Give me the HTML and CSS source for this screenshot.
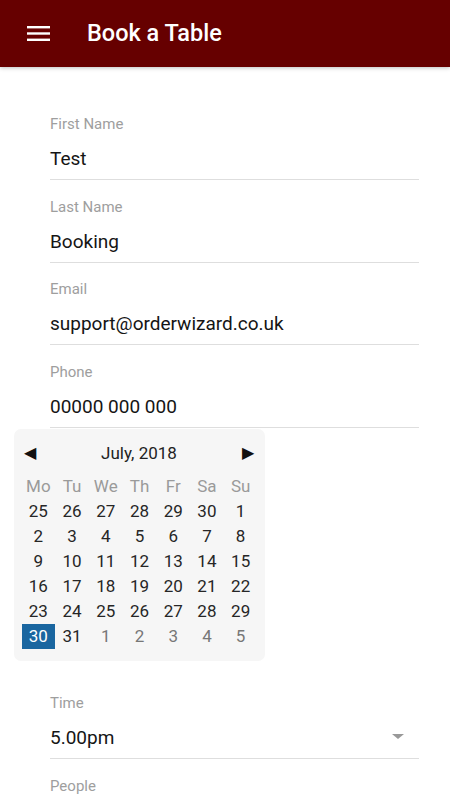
FILE: index.html
```html
<!DOCTYPE html>
<html>
<head>
    <meta charset="utf-8" />
    <title>Book a Table</title>
    <link rel="stylesheet" href="styles.css">
</head>
<body>
    <div class="topbar">
        <svg class="menu" width="23" height="15" viewBox="0 0 23 15">
            <rect x="0" y="0" width="23" height="2.4" fill="#fff" />
            <rect x="0" y="6.3" width="23" height="2.4" fill="#fff" />
            <rect x="0" y="12.6" width="23" height="2.4" fill="#fff" />
        </svg>
        <span class="title">Book a Table</span>
    </div>
    <div class="form">
        <div class="field">
            <div class="label">First Name</div>
            <div class="value">Test</div>
        </div>
        <div class="field">
            <div class="label">Last Name</div>
            <div class="value">Booking</div>
        </div>
        <div class="field">
            <div class="label">Email</div>
            <div class="value">support@orderwizard.co.uk</div>
        </div>
        <div class="field">
            <div class="label">Phone</div>
            <div class="value">00000 000 000</div>
        </div>
    </div>
    <div class="picker">
        <div class="picker-head">
            <span class="arrow">&#9664;</span>
            <span class="month">July, 2018</span>
            <span class="arrow">&#9654;</span>
        </div>
        <div class="days">
            <span class="wd">Mo</span><span class="wd">Tu</span><span class="wd">We</span><span class="wd">Th</span><span class="wd">Fr</span><span class="wd">Sa</span><span class="wd">Su</span>
            <span>25</span><span>26</span><span>27</span><span>28</span><span>29</span><span>30</span><span>1</span>
            <span>2</span><span>3</span><span>4</span><span>5</span><span>6</span><span>7</span><span>8</span>
            <span>9</span><span>10</span><span>11</span><span>12</span><span>13</span><span>14</span><span>15</span>
            <span>16</span><span>17</span><span>18</span><span>19</span><span>20</span><span>21</span><span>22</span>
            <span>23</span><span>24</span><span>25</span><span>26</span><span>27</span><span>28</span><span>29</span>
            <span class="sel">30</span><span>31</span><span class="other">1</span><span class="other">2</span><span class="other">3</span><span class="other">4</span><span class="other">5</span>
        </div>
    </div>
    <div class="form">
        <div class="field">
            <div class="label">Time</div>
            <div class="value select">5.00pm<span class="caret"></span></div>
        </div>
        <div class="field">
            <div class="label">People</div>
        </div>
    </div>
</body>
</html>
```

FILE: styles.css
```css
body {
    margin: 0;
    font-family: Roboto, "Liberation Sans", sans-serif;
    background: #fff;
    overflow: hidden;
}

.topbar {
    height: 67px;
    background-color: #660000;
    display: flex;
    align-items: center;
    padding-left: 27px;
    box-shadow: 0 1px 4px rgba(0, 0, 0, 0.25);
    position: relative;
}

.menu {
    display: block;
    margin-top: -1px;
}

.title {
    margin-left: 37px;
    color: #fff;
    font-size: 23.5px;
    font-weight: 500;
    margin-top: -1px;
}

.form {
    padding: 30.5px 31px 0 50px;
}

.form + .picker {
    margin-top: 1px;
}

.picker + .form {
    padding-top: 16px;
}

.field {
    padding-top: 16.5px;
}

.label {
    font-size: 15px;
    line-height: 20px;
    color: #9e9e9e;
    margin-bottom: 11px;
}

.value {
    font-size: 19px;
    line-height: 28px;
    color: #151515;
    padding-bottom: 6px;
    border-bottom: 1px solid #dedede;
}

.select {
    display: flex;
    justify-content: space-between;
    align-items: center;
}

.caret {
    width: 0;
    height: 0;
    border-left: 6px solid transparent;
    border-right: 6px solid transparent;
    border-top: 5px solid #999;
    margin-right: 15px;
    margin-top: -4px;
}

.picker {
    width: 236px;
    margin-left: 14px;
    padding: 6px 7.5px 12px;
    background-color: #f6f6f6;
    border-radius: 7px;
}

.picker-head {
    height: 36px;
    display: flex;
    align-items: center;
    justify-content: space-between;
    padding: 0 3px 0 2px;
    font-size: 17px;
    color: #222;
}

.arrow {
    font-size: 16px;
    color: #111;
}

.days {
    margin-top: 3px;
    display: grid;
    grid-template-columns: repeat(7, 1fr);
    grid-auto-rows: 25px;
    font-size: 17px;
    color: #262626;
    text-align: center;
}

.days span {
    line-height: 25px;
}

.days .wd {
    color: #9a9a9a;
}

.days .other {
    color: #777;
}

.days .sel {
    background-color: #1a66a0;
    color: #fff;
}
```
